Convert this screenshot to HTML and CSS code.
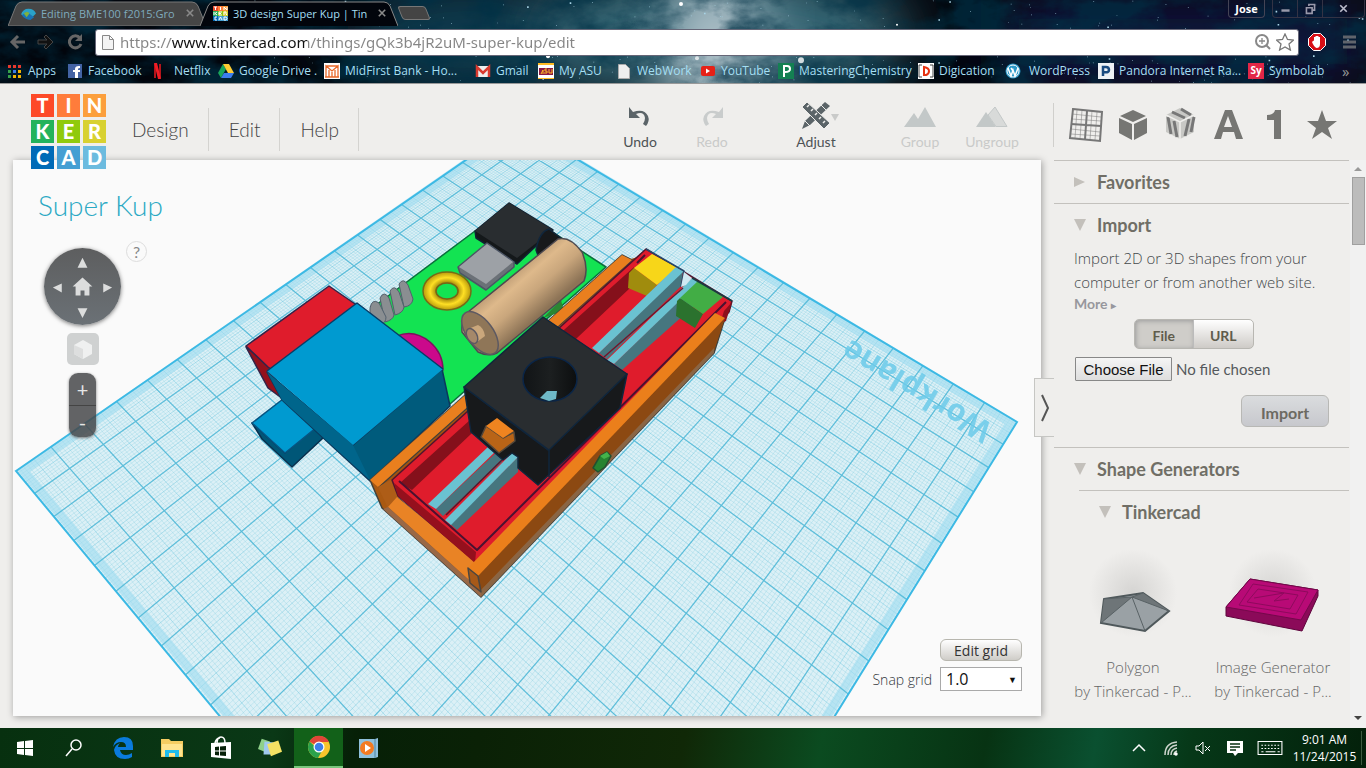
FILE: index.html
```html
<!DOCTYPE html>
<html lang="en">
<head>
<meta charset="utf-8">
<title>3D design Super Kup | Tinkercad</title>
<link rel="stylesheet" href="styles.css">
</head>
<body>
<header class="browser">
  <svg class="sky" viewBox="0 0 1366 84" preserveAspectRatio="none" aria-hidden="true">
    <defs>
      <filter id="soft" x="-50%" y="-100%" width="200%" height="300%"><feGaussianBlur stdDeviation="28"/></filter>
      <filter id="cloud" x="0" y="0" width="100%" height="100%">
        <feTurbulence type="fractalNoise" baseFrequency="0.018 0.03" numOctaves="5" seed="8"/>
        <feColorMatrix values="0 0 0 0 0  0 0 0 0 0.03  0 0 0 0 0.06  3 0 0 0 -1.1"/>
      </filter>
    </defs>
    <rect width="1366" height="84" fill="#02050c"/>
    <rect x="1000" width="366" height="84" fill="#08183c" filter="url(#soft)"/>
    <ellipse cx="470" cy="40" rx="130" ry="60" fill="#103a4d" filter="url(#soft)"/>
    <ellipse cx="720" cy="35" rx="190" ry="70" fill="#356675" filter="url(#soft)"/>
    <ellipse cx="715" cy="50" rx="50" ry="80" fill="#b0c2ca" filter="url(#soft)"/>
    <rect width="1366" height="84" filter="url(#cloud)" opacity=".7"/>
    <path id="stars" fill="#a9d4e6"/>
    <g fill="#fff"><circle cx="681" cy="4" r="2"/><circle cx="801" cy="61" r="3" opacity=".8"/><circle cx="548" cy="57" r="2"/><circle cx="697" cy="59" r="2" opacity=".7"/><circle cx="897" cy="25" r="1"/></g>
  </svg>
  <div class="tabs">
    <div class="tab">
      <svg class="tab-shape" viewBox="0 0 198 25" preserveAspectRatio="none"><path d="M0 25L8 5q2-4 6-4h170q4 0 6 4l8 20z" fill="#464646" stroke="#777"/></svg>
      <svg class="fav" viewBox="0 0 16 16"><path d="M0 9q2-6 8-6 6 0 8 5l-4 4-5-5-3 3z" fill="#2aa2c8"/><path d="M1 10q5-6 9-1l4 3-4 3q-6-1-9-5z" fill="#1973b4"/><path d="M3 8q4-4 6 0l-3 4z" fill="#7fb13f"/></svg>
      <span class="tab-title">Editing BME100 f2015:Gro</span><button class="x" aria-label="Close tab"><svg viewBox="0 0 10 10"><path d="M1 1l8 8m0-8L1 9" stroke="#8a8a8a" stroke-width="2"/></svg></button>
    </div>
    <div class="tab current">
      <svg class="tab-shape" viewBox="0 0 198 25" preserveAspectRatio="none"><path d="M0 25L8 5q2-4 6-4h170q4 0 6 4l8 20" fill="#02050c" stroke="#888"/></svg>
      <svg class="fav" viewBox="0 0 15 15"><path fill="#e94a2b" d="M0 0h5v5H0z"/><path fill="#ff7c3a" d="M5 0h5v5H5z"/><path fill="#fa9c38" d="M10 0h5v5h-5z"/><path fill="#28af5a" d="M0 5h5v5H0z"/><path fill="#8bc313" d="M5 5h5v5H5z"/><path fill="#d6ce35" d="M10 5h5v5h-5z"/><path fill="#0068b5" d="M0 10h5v5H0z"/><path fill="#439ed2" d="M5 10h10v5H5z"/><path d="M1 1h3M2.500 1v3M7.500 1v3M11 4V1l3 3V1M1 6v3M4 6L2 7.500 4 9M9 6H6v3h3M6 7.500h2M11 9V6h2v2l1 1M4 11H2v3h2M6 14l1.500-3L9 14M11 11v3h2l1-1.500-1-1.500z" stroke="#fff" fill="none"/></svg>
      <span class="tab-title">3D design Super Kup | Tin</span><button class="x" aria-label="Close tab"><svg viewBox="0 0 10 10"><path d="M1 1l8 8m0-8L1 9" stroke="#8a8a8a" stroke-width="2"/></svg></button>
    </div>
    <button class="newtab" aria-label="New tab"></button>
    <div class="window">
      <button class="user">Jose</button>
      <div class="winbtns">
        <button aria-label="Minimize"><svg viewBox="0 0 16 16"><path d="M3 9h10v3H3z" fill="#99a"/></svg></button>
        <button aria-label="Restore"><svg viewBox="0 0 16 16" fill="none" stroke="#99a" stroke-width="2"><path d="M3 7h7v7H3zM6 5V3h7v7h-2"/></svg></button>
        <button class="close" aria-label="Close"><svg viewBox="0 0 16 16"><path d="M4 4l8 8m0-8l-8 8" stroke="#bbc" stroke-width="2"/></svg></button>
      </div>
    </div>
  </div>
  <div class="address">
    <button class="nav" aria-label="Back"><svg viewBox="0 0 18 18" fill="none" stroke="#666" stroke-width="3"><path d="M17 9H4m6-6L4 9l6 6"/></svg></button>
    <button class="nav" aria-label="Forward"><svg viewBox="0 0 18 18" fill="#111" stroke="#444"><path d="M1 7h9L7 4l2-2 7 7-7 7-2-2 3-3H1z"/></svg></button>
    <button class="nav" aria-label="Reload"><svg viewBox="0 0 18 18" fill="none" stroke="#666" stroke-width="3"><path d="M14 5a6 6 0 1 0 1 6"/><path d="M16 1v7H9z" fill="#666" stroke="none"/></svg></button>
    <div class="urlbar">
      <svg class="i16" viewBox="0 0 16 16"><path d="M2.500 1.500h7l4 4v10h-11zM9.500 1.500v4h4" fill="#f4f4f4" stroke="#888"/></svg>
      <input class="url" aria-label="Address" value="https://www.tinkercad.com/things/gQk3b4jR2uM-super-kup/edit">
      <svg class="i18" viewBox="0 0 18 18" fill="none" stroke="#888" stroke-width="2"><circle cx="8" cy="8" r="6"/><path d="M12 12l4 4"/><path d="M5 8h6M8 5v6" stroke-width="1.300"/></svg>
      <svg class="i18" viewBox="0 0 18 18"><path d="M9 1l2.500 5.500 6 .6-4.500 4 1.400 6L9 14l-5.400 3L5 11 .5 7.100l6-.6z" fill="none" stroke="#777" stroke-width="1.300"/></svg>
    </div>
    <svg class="i18 block" viewBox="0 0 18 18"><path d="M5.500.5h7l5 5v7l-5 5h-7l-5-5v-7z" fill="#d80f16" stroke="#fff"/><path d="M5 8l1-.5V4h1.500v3V3H9v4-4h1.500v4V4H12v7q0 4-3.500 4Q6 14 4 9z" fill="#fff"/></svg>
    <button class="burger" aria-label="Menu"><svg class="i16" viewBox="0 0 16 16"><path d="M1 3h13M1 8h13M1 13h13" stroke="#60646c" stroke-width="3"/></svg></button>
  </div>
  <nav class="bookmarks">
    <a href="#"><svg viewBox="0 0 16 16"><path d="M1 2h3v3H1zM6 2h3v3H6zM11 2h3v3h-3z" fill="#e8382d"/><path d="M1 7h3v3H1z" fill="#37a24a"/><path d="M6 7h3v3H6z" fill="#3a7ce8"/><path d="M11 7h3v3h-3zM6 12h3v3H6zM11 12h3v3h-3z" fill="#f4b400"/><path d="M1 12h3v3H1z" fill="#37a24a"/></svg>Apps</a>
    <a href="#"><svg viewBox="0 0 16 16"><path fill="#4363a4" d="M1 1h14v14H1z"/><path d="M11 15V9h2V7h-2V6q0-1 2-1V3q-5-.5-5 3v1H6v2h2v6z" fill="#fff"/></svg>Facebook</a>
    <a href="#"><svg viewBox="0 0 16 16"><path d="M2 1v14M7 1v14" stroke="#b3141b" stroke-width="2"/><path d="M1 0h3l4 16H5z" fill="#f01d25"/></svg>Netflix</a>
    <a href="#"><svg viewBox="0 0 16 16"><path d="M5 1L0 10l3 5 5-9z" fill="#18a45b"/><path d="M5 1h6l5 9h-6z" fill="#fc3"/><path d="M6 10h10l-3 5H3z" fill="#3b7ded"/></svg>Google Drive .</a>
    <a href="#"><svg viewBox="0 0 16 16"><path fill="#fff" d="M0 0h16v16H0z"/><path d="M2 14V3l6 5 6-5v11M5 14V7M8 14V9M11 14V7M2 3h12M1 14h14" stroke="#e8692a" stroke-width="1.300" fill="none"/></svg>MidFirst Bank - Ho...</a>
    <a href="#"><svg viewBox="0 0 16 16"><path fill="#eee" d="M1 3h14v11H1z"/><path d="M2 14V4l6 6 6-6v10" stroke="#d93a2f" stroke-width="2.500" fill="none"/></svg>Gmail</a>
    <a href="#"><svg viewBox="0 0 16 16"><path fill="#fff" d="M0 0h16v16H0z"/><path d="M0 0h16v2H0zM0 15h16v1H0z" fill="#fb2"/><path d="M1 5h14v7H1z" fill="#8c1a40"/><path d="M3 11l2-4v4M9 6H7v2h2v2H6M11 6v4h3V6" stroke="#fb2" fill="none"/></svg>My ASU</a>
    <a href="#"><svg viewBox="0 0 16 16"><path d="M2.500 1.500h7l4 4v10h-11z" fill="#eee" stroke="#aaa"/></svg>WebWork</a>
    <a href="#"><svg viewBox="0 0 16 16"><rect x="1" y="3" width="14" height="10" rx="2" fill="#e62117"/><path d="M6 5.500v5l4-2.500z" fill="#fff"/></svg>YouTube</a>
    <a href="#"><svg viewBox="0 0 16 16"><path fill="#148052" d="M0 0h16v16H0z"/><path d="M6 14V3h3q3 0 3 3t-5 3" stroke="#fff" stroke-width="2" fill="none"/></svg>MasteringChemistry</a>
    <a href="#"><svg viewBox="0 0 16 16"><path fill="#fff" d="M0 0h16v16H0z"/><path d="M4 2H1v12h3M12 2h3v12h-3" stroke="#444" fill="none"/><path d="M6 4v8h2q3-1 3-4T6 4z" stroke="#e63312" stroke-width="2" fill="none"/></svg>Digication</a>
    <a href="#" class="wide"><svg viewBox="0 0 16 16"><circle cx="8" cy="8" r="7.500" fill="#2a98c8"/><circle cx="8" cy="8" r="6" fill="none" stroke="#fff"/><path d="M3 5l3 8 2-6 2 6 3-8M6 5l2 3" stroke="#fff" stroke-width="1.500" fill="none"/></svg>WordPress</a>
    <a href="#"><svg viewBox="0 0 16 16"><path fill="#edf1f5" d="M0 0h16v16H0z"/><path d="M5 13V4h3q3 0 3 3T6 9" stroke="#1a4b80" stroke-width="2.500" fill="none"/></svg>Pandora Internet Ra...</a>
    <a href="#"><span class="sy">Sy</span>Symbolab</a>
    <button class="more" aria-label="More bookmarks">»</button>
  </nav>
</header>

<div class="app">
  <section class="editor">
    <div class="topbar">
      <div class="logo" aria-label="Tinkercad"><b class="l1">T</b><b class="l2">I</b><b class="l3">N</b><b class="l4">K</b><b class="l5">E</b><b class="l6">R</b><b class="l7">C</b><b class="l8">A</b><b class="l9">D</b></div>
      <nav class="menu"><a href="#">Design</a><a href="#">Edit</a><a href="#">Help</a></nav>
      <div class="tools">
        <button class="tool"><svg viewBox="0 0 30 30"><path d="M4 7v11h11l-4-4q8-3 9 4 0 3-2 6l3 2q4-5 2-10-4-8-15-4z" fill="#5b6468"/></svg>Undo</button>
        <button class="tool off"><svg viewBox="0 0 30 30"><path d="M26 7v11H15l4-4q-8-3-9 4 0 3 2 6l-3 2q-4-5-2-10 4-8 15-4z" fill="#c9cccc"/></svg>Redo</button>
        <button class="tool adjust"><svg viewBox="0 0 30 30"><path d="M1 29l3-8L24 2l5 4L9 25z" fill="#5b6468"/><path d="M20 5l5 5M4 21l5 5" stroke="#efeeec"/><path d="M1 7l5-5 23 21-6 6z" fill="#5b6468" stroke="#efeeec"/><path d="M8 5L6 7m6 2l-2 2m6 2l-2 2m6 2l-2 2m6 2l-2 2" stroke="#efeeec" stroke-width="1.500"/></svg>Adjust</button>
        <button class="tool off"><svg viewBox="0 0 34 30"><path d="M1 27L11 13l4 6 7-12 11 20z" fill="#c3c8c8"/></svg>Group</button>
        <button class="tool off"><svg viewBox="0 0 34 30"><path d="M1 27L11 12l10 15z" fill="#c3c8c8"/><path d="M13 15l7-8 12 19.500H21z" fill="#d8dad9" stroke="#c3c8c8"/></svg>Ungroup</button>
      </div>
    </div>
    <main class="canvas">
      <svg class="scene" viewBox="13 160 1028 556" preserveAspectRatio="xMidYMid slice" role="img" aria-label="Super Kup model on the workplane">
        <defs>
          <linearGradient id="wood" gradientUnits="userSpaceOnUse" x1="510" y1="270" x2="545" y2="310"><stop offset="0" stop-color="#b59570"/><stop offset=".3" stop-color="#deb98b"/><stop offset=".6" stop-color="#c9a67c"/><stop offset="1" stop-color="#8c7356"/></linearGradient>
          <linearGradient id="hole"><stop offset="0" stop-color="#111416"/><stop offset=".5" stop-color="#1c1f20"/><stop offset="1" stop-color="#0c0e0f"/></linearGradient>
          <radialGradient id="ring"><stop offset=".45" stop-color="#a88c0c"/><stop offset=".7" stop-color="#ffe024"/><stop offset="1" stop-color="#b8990b"/></radialGradient>
        </defs>
        <g id="plane"></g>
        <text class="plane-name" transform="translate(994 425) rotate(211)">Workplane</text>
        <g stroke-linejoin="round" stroke-width="1.500">
          <path d="M475 231L546 228 606 267 450 404 372 346 372 308z" fill="#13e352" stroke="#0b6f3c"/>
          <path d="M475 231L509 203 553 230 517 264 476 238z" fill="#14181a" stroke="#0f2233"/><path d="M475 231L509 203 553 230 517 258z" fill="#292d30"/>
          <path d="M536 250q3-18 13-21l12 9-22 20z" fill="#17191b" stroke="#10263c"/>
          <path d="M458 267L487 243 514 262 514 267 486 290 460 273z" fill="#6b7177" stroke="#4c5565"/><path d="M459 267L487 244 513 262 486 284z" fill="#9da1a6"/>
          <ellipse cx="447" cy="291" rx="24" ry="19" fill="url(#ring)" stroke="#766b16"/><ellipse cx="447" cy="291" rx="11" ry="8" fill="#13e352" stroke="#756516"/>
          <g fill="#8a8e91" stroke="#53606d" stroke-width="1"><path d="M399 284q4-7 9 1l5 14q-1 7-9 8z"/><path d="M390 291q4-7 9 1l5 15q-1 6-9 8z"/><path d="M380 298q4-8 9 0l5 17q-1 5-9 7z"/><path d="M370 308q2-10 9-5l7 14q0 6-6 8l-10-8z"/></g>
          <path d="M397 336Q414 329 430 342 443 353 443 370z" fill="#cb098b" stroke="#7c125e"/>
          <path d="M246 347L272 368 283 399 268 388z" fill="#94111c" stroke="#322449"/><path d="M246 346L329 286 358 306 275 372 268 367z" fill="#df1c2c" stroke="#322449"/>
          <path d="M252 423L285 453 315 427 323 438 292 467 262 439z" fill="#005677" stroke="#08304e"/><path d="M252 423L283 399 317 427 285 453z" fill="#009ad0" stroke="#075582"/>
          <path d="M267 372L353 445 442 369 450 406 370 481 282 400z" fill="#005b7c" stroke="#0b385c"/><path d="M267 372L353 445 370 480 282 400z" fill="#00658b"/><path d="M267 371L357 303 443 369 353 445z" fill="#009ad0"/><path d="M267 371L357 303 443 369" fill="none" stroke="#063d68"/>
          <path d="M543 318L561 300 564 311z" fill="#2c8632"/>
          <path d="M462 332Q461 316 468 312L558 239Q570 236 582 252 589 268 584 281L497 353Q488 357 478 352z" fill="url(#wood)" stroke="#4e4a50"/><ellipse cx="480" cy="333" rx="13" ry="25" transform="rotate(-37 480 333)" fill="#8f7658" stroke="#5d5962"/><path d="M468 329l10-4q6 3 7 11l-8 6z" fill="#caa77c"/><ellipse cx="472" cy="336" rx="5" ry="8" transform="rotate(-28 472 336)" fill="#a5886a" stroke="#5d5962"/>
          <path d="M377 488L631 259 647 254 398 498z" fill="#a4530f"/>
          <path d="M370 480L622 255 632 260 379 487 397 497 472 561 468 568 715 313 725 318 714 353 481 597 382 508z" fill="#a95912" stroke="#40413c"/>
          <path d="M370 480L622 255 632 260 378 487z" fill="#e97f1e"/><path d="M378 487L397 476 399 497 388 508z" fill="#ae5d17"/><path d="M388 507L397 497 475 560 469 580z" fill="#e98325"/><path d="M383 509L388 507 469 580 481 590 481 597z" fill="#996846"/>
          <path d="M392 480L646 249 732 301 729 312 477 563 398 496z" fill="#df1c2c" stroke="#50152d"/>
          <path d="M400 483L470 420 565 329 634 267 630 288 577 338 471 434 412 490z" fill="#85101b"/><path d="M394 483L476 552 475 563 398 496z" fill="#95101d"/><path d="M399 481L477 550 726 302M637 263L645 255" fill="none" stroke="#4a1230" stroke-width="2"/><path d="M732 302l-8 9-4 13 6-3z" fill="#8d101c"/>
          <path d="M629 273L634 268 657 285 647 296 628 288z" fill="#a08c0d"/><path d="M634 268L652 254 678 268 657 285z" fill="#f7d619"/>
          <path d="M599 353L683 271 681 286 607 359z" fill="#46767f"/><path d="M592 348L676 267 684 271 599 353z" fill="#6ac2d1"/><path d="M646 249L684 271 681 287" fill="none" stroke="#27476a"/>
          <path d="M614 364L698 282 694 306 622 370z" fill="#46767f"/><path d="M607 360L692 278 699 282 614 364z" fill="#6ac2d1"/><path d="M604 357L683 288" stroke="#73162c"/>
          <path d="M677 301L680 298 703 314 695 328 676 316z" fill="#2b722e"/><path d="M680 298L698 281 723 297 703 314z" fill="#42ad45"/><path d="M692 278L732 301" stroke="#173d43"/>
          <path d="M684 272l8 6-6 7-5 2z" fill="#cfe9f2"/>
          <path d="M478 576L725 318 714 351 481 590z" fill="#8c4912"/><path d="M481 590L714 348 714 353 481 597z" fill="#8a6544"/><path d="M468 568L715 313 725 318 478 576z" fill="#eb7f1b"/><path d="M468 568L478 576 481 592 470 583z" fill="#a75918" stroke="#4b4640"/>
          <path d="M436 509L502 447 502 462 443 516z" fill="#46767f"/><path d="M428 504L489 446 497 450 436 509z" fill="#6ac2d1"/><path d="M446 515L502 460" stroke="#5a142a"/>
          <path d="M450 524L518 457 518 472 457 530z" fill="#46767f"/><path d="M445 520L512 453 518 457 451 525z" fill="#6ac2d1"/>
          <path d="M464 387L548 450 627 374 620 408 538 485 518 468 518 457 512 453 503 460 471 432z" fill="#17191b" stroke="#10263c"/><path d="M464 387L543 317 627 374 549 450z" fill="#292d30" stroke="#10263c"/><path d="M549 450v27" stroke="#10263c"/>
          <ellipse cx="550" cy="379" rx="27" ry="22" fill="url(#hole)" stroke="#0a2547"/><path d="M540 398L547 391 557 391 556 399 549 401z" fill="#6fb9c7"/>
          <path d="M486 426L503 438 514 432 515 441 499 453 481 437z" fill="#b96417" stroke="#51463a"/><path d="M486 426L497 418 514 431 503 438z" fill="#ef8420"/>
          <path d="M593 468L600 456 607 452 611 456 605 467 598 472z" fill="#278331" stroke="#215131"/><path d="M600 456L607 452 610 456 604 459z" fill="#45b34a"/>
        </g>
      </svg>
      <h1 class="title">Super Kup</h1>
      <button class="help">?</button>
      <div class="controls">
        <div class="wheel">
          <svg viewBox="0 0 78 78" fill="#dcdddd"><path d="M39 10l5 10H34zM39 71l5-10H34zM9 40l9-4v9zM69 40l-9-4v9zM39 30L29 39h3v9h5v-5h4v5h5v-9h3z"/></svg>
        </div>
        <button class="fit" aria-label="Fit view"><svg viewBox="0 0 32 32"><path d="M16 7l9 5v9l-9 5-9-5v-9z" fill="#eff0f0"/><path d="M7 12l9 4v10l-9-5z" fill="#dddede"/></svg></button>
        <div class="zoom"><button aria-label="Zoom in">+</button><button aria-label="Zoom out">-</button></div>
      </div>
      <form class="gridbox">
        <button type="button" class="editgrid">Edit grid</button>
        <label for="snap">Snap grid</label>
        <span class="selectwrap"><select id="snap"><option>1.0</option></select></span>
      </form>
    </main>
    <button class="collapse" aria-label="Collapse panel"><svg viewBox="0 0 12 30"><path d="M3 2l6 13-6 13" fill="none" stroke="#555" stroke-width="2"/></svg></button>
  </section>

  <aside class="side">
    <div class="shapes">
      <button aria-label="Workplane"><svg viewBox="0 0 36 36" fill="none" stroke="#777"><path d="M5 2l29 3-2 29-30-3z" stroke-width="2"/><path d="M19 4l-2 28M3 17l30 2" stroke-width="2"/><path d="M9 3L7 31M14 3l-2 29M24 4l-2 29M29 5l-2 28M4 7l29 3M4 12l29 2M3 22l29 3M3 27l29 2" opacity=".5"/></svg></button>
      <button aria-label="Box"><svg viewBox="0 0 36 36" fill="#767673"><path d="M18 3l13 6-13 6L5 9zM4 11l13 6v16L4 26zM32 11l-13 6v16l13-7z"/></svg></button>
      <button aria-label="Hole"><svg viewBox="0 0 36 36"><path d="M18 1l14 7v17l-14 7-14-7V8z" fill="#c8c8c5"/><path d="M6 10l3 17M12 14l3 16M27 12l-4 17M32 10l-3 15M10 5l13 6M19 2l10 6" stroke="#777" stroke-width="3"/><path d="M4 8l14 7 14-7M18 15v17" stroke="#efeeec" stroke-width="1.500" fill="none"/></svg></button>
      <button aria-label="Letters"><svg viewBox="0 0 36 36"><path d="M4 32L15 3h7l11 29h-7l-2-7H13l-2 7zm10-12h8l-4-11z" fill="#767673" fill-rule="evenodd"/></svg></button>
      <button aria-label="Numbers"><svg viewBox="0 0 36 36"><path d="M10 8q7 0 8-5h6v29h-7V13h-7z" fill="#767673"/></svg></button>
      <button aria-label="Favorites"><svg viewBox="0 0 36 36"><path d="M18 3l4 11h11l-9 7 4 11-10-7-10 7 4-11-9-7h11z" fill="#767673"/></svg></button>
    </div>
    <div class="panel">
      <div class="list">
        <section><h2><i class="tri right"></i>Favorites</h2></section>
        <section class="import">
          <h2><i class="tri"></i>Import</h2>
          <p>Import 2D or 3D shapes from your computer or from another web site.</p>
          <a class="morelink" href="#">More <small>▸</small></a>
          <div class="switch"><button class="on">File</button><button>URL</button></div>
          <input class="file" type="file" aria-label="File to import">
          <button class="go">Import</button>
        </section>
        <section><h2><i class="tri"></i>Shape Generators</h2></section>
        <section class="sub">
          <h2><i class="tri"></i>Tinkercad</h2>
        </section>
        <div class="items">
          <a href="#" class="item"><svg viewBox="-11 0 120 100"><path d="M20 61L59 55 85 73 61 93 17 85z" fill="#9aa1a5" stroke="#4f585b" stroke-width="2"/><path d="M20 61L48 59 17 85zM48 59l11-4 26 18z" fill="#6e7578"/><path d="M20 61L48 59 59 55M48 59L17 85M48 59l13 34M48 59l37 14" stroke="#596265" fill="none"/></svg><span>Polygon</span><span>by Tinkercad - P...</span></a>
          <a href="#" class="item"><svg viewBox="-11 0 120 100"><path d="M26 41l68 11v6L78 93 2 78v-9z" fill="#8b0a59" stroke="#5e053c"/><path d="M26 41l68 11-17 30L2 69z" fill="#b80a76" stroke="#74094b"/><path d="M29 46l55 8-12 22-57-9zM34 51l40 6-8 14-43-7zM30 60l30-5-10 8 15-2" fill="none" stroke="#8e0a5d"/></svg><span>Image Generator</span><span>by Tinkercad - P...</span></a>
        </div>
      </div>
      <div class="scroll"><i class="up"></i><i class="thumb"></i><i class="down"></i></div>
    </div>
  </aside>
</div>

<footer class="taskbar">
  <button aria-label="Start"><svg viewBox="0 0 24 24"><path d="M4 6l7-1v7H4zM12 5l8-1v8h-8zM4 13h7v6l-7-1zM12 13h8v7l-8-1z" fill="#fff"/></svg></button>
  <button aria-label="Search"><svg viewBox="0 0 24 24" fill="none" stroke="#fff" stroke-width="1.500"><circle cx="14" cy="9" r="5"/><path d="M10 13l-6 7"/></svg></button>
  <button aria-label="Edge"><svg viewBox="0 0 24 24"><path d="M2 11Q4 1 13 1q9 0 9 9v4H9q1 5 6 5 3 0 6-2v4q-3 2-7 2-10 0-11-9 1-5 6-7-2 2-2 4h8q0-5-5-5-5 0-8 5z" fill="#0a7bdc"/></svg></button>
  <button aria-label="File Explorer"><svg viewBox="0 0 24 24"><path d="M1 3h8l2 2h12v16H1z" fill="#f5cd62"/><path d="M2 8h20v12H2z" fill="#ffe48f"/><path d="M5 21v-7h14v7h-4v-4H9v4z" fill="#20bcec"/></svg></button>
  <button aria-label="Store"><svg viewBox="0 0 24 24"><path d="M2 7l20-1v17L2 21z" fill="#fff"/><path d="M8 8Q8 1 12 1t4 6M6 7q1-5 5-5" stroke="#fff" stroke-width="1.500" fill="none"/><path d="M6 11l4-.5v4H6zM11 10.500l6-.5v4.500h-6zM6 15.500h4v4L6 19zM11 15.500h6V20l-6-.5z" fill="#062008"/></svg></button>
  <button aria-label="Sticky Notes"><svg viewBox="0 0 26 24"><path d="M4 2l9 3-4 12-9-4z" fill="#8fd08a"/><path d="M7 5l10 1-1 13H6z" fill="#9fc9ee"/><path d="M10 8l12-4 4 12-12 5z" fill="#f5e263"/></svg></button>
  <button class="active" aria-label="Chrome"><svg viewBox="0 0 24 24"><circle cx="12" cy="12" r="11" fill="#f8c52c"/><path d="M12 12L2.500 6.500A11 11 0 0 1 22 7H12z" fill="#df4638"/><path d="M2.500 6.500A11 11 0 0 0 11 23l5-9-4 1z" fill="#2ba24c"/><circle cx="12" cy="12" r="5.500" fill="#fff"/><circle cx="12" cy="12" r="4.300" fill="#3d7fe9"/></svg></button>
  <button aria-label="Media Player"><svg viewBox="0 0 24 24"><path d="M3 3h16l3-1v19l-3 1H3z" fill="#8fc0dc"/><path d="M19 3v19" stroke="#53849f"/><circle cx="11" cy="12" r="7" fill="#f37b22"/><path d="M9 8v8l6-4z" fill="#fff"/></svg></button>
  <div class="tray">
    <svg viewBox="0 0 20 20"><path d="M4 13l6-6 6 6" stroke="#fff" stroke-width="1.500" fill="none"/></svg>
    <svg viewBox="0 0 20 20" fill="none" stroke="#ccd5cc" stroke-width="1.500"><path d="M4 17Q4 5 16 4M7 17q0-9 9-10M10 17q0-6 6-7M13 17q0-3 3-4"/><circle cx="15" cy="16" r="1" fill="#fff" stroke="#fff"/></svg>
    <svg viewBox="0 0 20 20" fill="none" stroke="#fff"><path d="M3 8h3l4-4v12l-4-4H3zM12 8l5 5m0-5l-5 5"/></svg>
    <svg viewBox="0 0 20 20"><path d="M2 3h16v12h-5l-3 3-2-3H2z" fill="#fff"/><path d="M5 6h10M5 9h10M5 12h6" stroke="#073010" stroke-width="1.300"/></svg>
    <svg class="keys" viewBox="0 0 24 20" fill="none" stroke="#fff"><path d="M1 4h22v12H1z"/><path d="M4 7.500h17M4 10.500h17" stroke-dasharray="1.500 1.500"/><path d="M4 13.500h2M8 13.500h9M19 13.500h2"/></svg>
    <time class="clock">9:01 AM<br>11/24/2015</time>
  </div>
</footer>
<script src="scene.js"></script>
</body>
</html>
```
FILE: styles.css
```css
* { box-sizing: border-box; }
body { margin: 0; height: 100vh; display: flex; flex-direction: column; overflow: hidden; background: #efeeec; font-family: Lato, "Open Sans", sans-serif; color: #5d6063; }
button { font: inherit; color: inherit; background: none; border: 0; padding: 0; }
a { color: inherit; text-decoration: none; }
h1, h2, p { margin: 0; }

.browser { position: relative; flex: none; color: #a5dff3; font: 12px "Open Sans", sans-serif; background: #02050c; border-bottom: 1px solid #999; }
.sky { position: absolute; inset: 0; width: 100%; height: 100%; }
.tabs, .address, .bookmarks { position: relative; display: flex; align-items: center; }
.tabs { height: 26px; padding-left: 8px; }
.tab { position: relative; display: flex; align-items: center; gap: 5px; width: 198px; height: 25px; padding: 0 12px 0 13px; margin-right: -6px; font-size: 11px; color: #7fabbd; }
.tab.current { color: #a5dff3; }
.tab-shape { position: absolute; inset: 0; width: 100%; height: 100%; }
.tab-title { position: relative; flex: 1; white-space: nowrap; }
.fav { position: relative; width: 15px; height: 15px; }
.x { position: relative; display: flex; }
.x svg { width: 8px; height: 8px; }
.newtab { width: 28px; height: 14px; margin-left: 8px; background: #444; border: 1px solid #777; transform: skewX(22deg); border-radius: 3px; }
.window { margin-left: auto; display: flex; align-items: flex-start; gap: 7px; align-self: flex-start; }
.user { height: 18px; width: 37px; color: #fff; font-size: 11px; font-weight: 700; border: 1px solid #445; border-top: 0; border-radius: 0 0 4px 4px; }
.winbtns { display: flex; height: 18px; margin-right: 1px; border: 1px solid #334; border-top: 0; border-radius: 0 0 4px 4px; }
.winbtns button { width: 25px; display: flex; justify-content: center; align-items: center; border-right: 1px solid #334; }
.winbtns button.close { width: 41px; border: 0; }
.winbtns svg { width: 13px; height: 13px; }
.address { height: 32px; padding: 0 8px 0 8px; }
.nav { width: 29px; display: flex; }
.nav svg { width: 18px; height: 18px; }
.urlbar { flex: 1; display: flex; align-items: center; gap: 4px; height: 27px; padding: 0 4px; background: #fff; border: 1px solid #667; border-radius: 3px; }
.url { flex: 1; min-width: 0; border: 0; outline: 0; padding: 0; font: 15px/24px "Noto Sans", sans-serif; color: transparent; background: linear-gradient(90deg, #858585 51px, #111 51px, #111 187px, #858585 187px); -webkit-background-clip: text; background-clip: text; }
.i16 { width: 16px; height: 16px; }
.i18 { width: 18px; height: 18px; }
.block { margin: 0 16px 0 9px; }
.burger { display: flex; }
.bookmarks { height: 25px; padding-left: 7px; display: grid; grid-template-columns: 60px 86px 65px 106px 151px 63px 78px 84px 78px 140px 87px 93px 150px 1fr 24px; }
.bookmarks a { display: flex; align-items: center; gap: 5px; white-space: nowrap; }
.bookmarks a.wide { gap: 8px; }
.bookmarks svg, .sy { width: 16px; height: 16px; flex: none; }
.sy { background: #e32647; color: #fff; font-size: 10px; font-weight: 700; line-height: 15px; text-align: center; }
.more { color: #999; font-size: 15px; text-align: left; }

.app { flex: 1; min-height: 0; display: flex; }
.editor { position: relative; flex: 1; min-width: 0; display: flex; flex-direction: column; padding: 0 13px 12px; }
.topbar { position: relative; height: 76px; flex: none; display: flex; align-items: center; justify-content: space-between; padding: 0 13px 0 99px; }
.logo { position: absolute; z-index: 2; left: 18px; top: 10px; display: grid; grid-template-columns: repeat(3, 23px); gap: 3px; }
.logo b { height: 23px; color: #fff; font: 900 20px/23px Lato, sans-serif; text-align: center; }
.l1 { background: #fd4a28; } .l2 { background: #ff7c3b; } .l3 { background: #fc9f3c; }
.l4 { background: #23b35c; } .l5 { background: #90ca0c; } .l6 { background: #d8d131; }
.l7 { background: #006bb7; } .l8 { background: #459fd3; } .l9 { background: #6cbbdf; }
.menu { display: flex; margin-top: 14px; font: 300 19px/43px Lato, sans-serif; color: #444; }
.menu a { padding: 0 19px 0 20px; border-right: 1px solid #d4d3d0; }
.tools { display: flex; padding-top: 8px; }
.tool { position: relative; width: 72px; display: flex; flex-direction: column; align-items: center; gap: 2px; font-size: 14px; line-height: 20px; color: #4d5255; }
.tool svg { height: 30px; width: 34px; }
.tool.off { color: #c9cac9; }
.tool.adjust { margin: 0 32px; }
.adjust::after { content: ""; position: absolute; right: 13px; top: 14px; border: 4px solid transparent; border-top: 7px solid #c9cac9; border-bottom: 0; }
.canvas { position: relative; flex: 1; min-height: 0; background: #fafafa; box-shadow: 1px 1px 7px rgba(0,0,0,.35); }
.scene { position: absolute; inset: 0; width: 100%; height: 100%; }
.fill { fill: #dcf0f6; }
.band { fill: none; stroke: #9fdcf0; stroke-width: 9; opacity: .6; }
.fine { fill: none; stroke: #59bcd8; stroke-width: 1; opacity: .2; }
.mid { fill: none; stroke: #43b6d8; stroke-width: 1; opacity: .18; }
.coarse { fill: none; stroke: #38aed2; stroke-width: 1.300; opacity: .66; }
.edge { fill: none; stroke: #3cb9e4; stroke-width: 2; }
.plane-name { font: 700 31px "Noto Sans", sans-serif; fill: #6ccbea; opacity: .85; }
.title { position: absolute; left: 25px; top: 28px; font: 300 28px/34px Lato, sans-serif; color: #2ba9c4; }
.help { position: absolute; left: 113px; top: 81px; width: 21px; height: 21px; border: 1px solid #ddd; border-radius: 50%; font-size: 16px; line-height: 19px; color: #888; background: #fafafa; }
.controls { position: absolute; left: 31px; top: 88px; display: flex; flex-direction: column; align-items: center; gap: 8px; width: 77px; }
.wheel { width: 77px; height: 77px; border-radius: 50%; background: linear-gradient(#5d5e5f, #6b7176); box-shadow: 0 1px 4px #777; }
.wheel svg { display: block; width: 77px; height: 77px; }
.fit { width: 32px; height: 32px; border-radius: 5px; background: #cfd1d1; }
.fit svg { display: block; }
.zoom { width: 27px; border-radius: 9px; background: rgba(70,72,74,.85); box-shadow: 0 1px 3px #777; color: #e6e6e6; font-size: 20px; }
.zoom button { display: block; width: 27px; height: 32px; }
.zoom button + button { border-top: 1px solid #444; }
.gridbox { position: absolute; right: 19px; bottom: 25px; display: grid; grid-template-columns: auto 82px; gap: 6px 8px; align-items: center; font: 300 14px "Open Sans", sans-serif; color: #33383c; }
.editgrid { grid-column: 2; height: 22px; color: #333; font-weight: 400; background: linear-gradient(#fff, #cfcdc8); border: 1px solid #b7b6ae; border-radius: 6px; }
.selectwrap { position: relative; }
.selectwrap::after { content: "▼"; position: absolute; right: 5px; top: 6px; font-size: 9px; color: #111; }
select { appearance: none; display: block; width: 82px; height: 24px; padding: 0 5px; font: 16px "Open Sans", sans-serif; color: #111; background: #fff; border: 1px solid #a9a9a9; border-radius: 0; }
.collapse { position: absolute; right: 0; top: 294px; width: 20px; height: 59px; background: #efeeec; border: 1px solid #c6c6c3; border-right: 0; display: flex; align-items: center; justify-content: center; }
.collapse svg { width: 12px; height: 30px; }

.side { width: 312px; flex: none; display: flex; flex-direction: column; min-height: 0; }
.shapes { height: 76px; flex: none; display: flex; align-items: center; padding: 6px 20px 0 0; }
.shapes::before { content: ""; height: 44px; margin-left: -1px; border-left: 1px solid #d0cfcc; margin-right: 8px; }
.shapes button { flex: 1; height: 40px; display: flex; align-items: center; justify-content: center; }
.shapes svg { width: 36px; height: 36px; }
.panel { flex: 1; min-height: 0; display: flex; }
.list { flex: 1; overflow: hidden; margin-right: 1px; }
.list section { border-top: 1px solid #c3c1bd; }
.list h2 { display: flex; align-items: center; height: 42px; padding-left: 20px; font: 700 18px Lato, sans-serif; color: #706e66; }
.tri { width: 23px; flex: none; }
.tri::before { content: ""; display: block; width: 0; border: 6px solid transparent; border-top: 12px solid #c3c0bb; border-bottom: 0; }
.tri.right::before { border: 5px solid transparent; border-left: 11px solid #c3c0bb; border-right: 0; }
.list .import { height: 244px; padding: 0 20px; display: flex; flex-direction: column; }
.import h2 { margin-left: -20px; flex: none; }
.import p { font: 300 15px/24px "Open Sans", sans-serif; width: 250px; color: #44484b; }
.morelink { font-weight: 700; font-size: 14px; line-height: 20px; color: #97979d; }
.morelink small { font-size: 10px; }
.switch { align-self: center; display: flex; width: 120px; height: 30px; margin: 4px 16px 8px 0; border: 1px solid #b8b7b2; border-radius: 5px; overflow: hidden; font-size: 14px; font-weight: 700; color: #5f5c4c; background: linear-gradient(#fff, #cecbc7); }
.switch button { flex: 1; padding-top: 3px; }
.switch .on { background: #cfcdc9; box-shadow: inset 1px 1px 5px #999; border-right: 1px solid #bbb; }
.file { font: 15px Lato, sans-serif; color: #55595c; width: 250px; margin-left: 1px; }
.file::file-selector-button { width: 97px; height: 24px; padding: 0; font: 15px "Liberation Sans", sans-serif; color: #111; background: linear-gradient(#f5f5f5, #dedede); border: 1px solid #888; border-radius: 1px; }
.go { align-self: flex-end; width: 88px; height: 32px; margin-top: 14px; padding-top: 2px; font-size: 16px; font-weight: 700; color: #6c6a62; background: linear-gradient(#dadcde, #c7c8cd); border: 1px solid #b8b8b5; border-radius: 6px; }
.list .sub { margin-left: 25px; }
.items { display: grid; grid-template-columns: 140px 140px; padding: 0 7px 0 9px; }
.item { display: flex; flex-direction: column; align-items: center; font: 300 15px/24px "Open Sans", sans-serif; color: #666; white-space: nowrap; }
.item svg { width: 120px; height: 100px; margin: 5px 0 17px; background: radial-gradient(circle at 50% 55%, #d5d4d2, #efeeec 44px); }
.scroll { width: 16px; display: flex; flex-direction: column; align-items: center; background: #f1f1f1; padding: 7px 0 8px; }
.up { border: 4px solid transparent; border-bottom-color: #999; border-top: 0; }
.thumb { width: 13px; height: 68px; margin-top: 6px; background: #bcbcbc; border: 1px solid #a0a0a0; }
.down { margin-top: auto; border: 4px solid transparent; border-top-color: #444; border-bottom: 0; }

.taskbar { flex: none; height: 40px; display: flex; background: linear-gradient(100deg, #07300f 0%, #0a3816 20%, #062007 26%, #0a2106 35%, #102807 50%, #0b4b20 60%, #073313 72%, #0a5030 80%, #063818 87%, #03200a 100%); color: #fff; }
.taskbar button { width: 49px; display: flex; align-items: center; justify-content: center; }
.taskbar button svg { width: 24px; height: 24px; }
.taskbar .active { background: #126119; border-bottom: 2px solid #79c77d; }
.tray { margin-left: auto; display: flex; align-items: center; gap: 12px; padding-right: 4px; }
.tray svg { width: 20px; height: 20px; }
.tray .keys { width: 26px; height: 22px; }
.clock { width: 71px; padding-right: 3px; text-align: center; font: 12px/17px "Open Sans", sans-serif; border-right: 1px solid #3c5b40; margin-left: -4px; }
```
FILE: scene.js
```js
const SVG = "http://www.w3.org/2000/svg";
const plane = document.getElementById("plane");

// Workplane corners: left, top, right, bottom.
const P = [[16, 471], [518, 124], [1017, 422], [572, 1140]];

// Projective map of the unit square onto the four corners.
const [[x0, y0], [x1, y1], [x2, y2], [x3, y3]] = P;
const dx1 = x1 - x2, dx2 = x3 - x2, sx = x0 - x1 + x2 - x3;
const dy1 = y1 - y2, dy2 = y3 - y2, sy = y0 - y1 + y2 - y3;
const det = dx1 * dy2 - dx2 * dy1;
const g = (sx * dy2 - dx2 * sy) / det;
const h = (dx1 * sy - sx * dy1) / det;
function at(u, v) {
  const w = g * u + h * v + 1;
  const x = ((x1 - x0 + g * x1) * u + (x3 - x0 + h * x3) * v + x0) / w;
  const y = ((y1 - y0 + g * y1) * u + (y3 - y0 + h * y3) * v + y0) / w;
  return x.toFixed(1) + " " + y.toFixed(1);
}
function lines(n) {
  let d = "";
  for (let i = 1; i < n; i++) {
    const t = i / n;
    d += `M${at(t, 0)}L${at(t, 1)}M${at(0, t)}L${at(1, t)}`;
  }
  return d;
}
function ring(m) {
  return `M${at(m, m)}L${at(1 - m, m)}L${at(1 - m, 1 - m)}L${at(m, 1 - m)}Z`;
}
function add(cls, d) {
  const p = document.createElementNS(SVG, "path");
  p.setAttribute("class", cls);
  p.setAttribute("d", d);
  plane.appendChild(p);
}
add("fill", ring(0));
add("fine", lines(200));
add("mid", lines(40));
add("band", ring(0.007));
add("coarse", lines(20));
add("edge", ring(0));

// Scattered stars behind the tab strip.
let seed = 7, stars = "";
const rnd = () => (seed = (seed * 16807) % 2147483647) / 2147483647;
for (let i = 0; i < 260; i++) {
  const s = rnd() < 0.12 ? 1.6 : 0.7;
  stars += `M${(250 + rnd() * 1116).toFixed(1)} ${(rnd() * 84).toFixed(1)}h${s}v${s}h-${s}z`;
}
document.getElementById("stars").setAttribute("d", stars);
```
